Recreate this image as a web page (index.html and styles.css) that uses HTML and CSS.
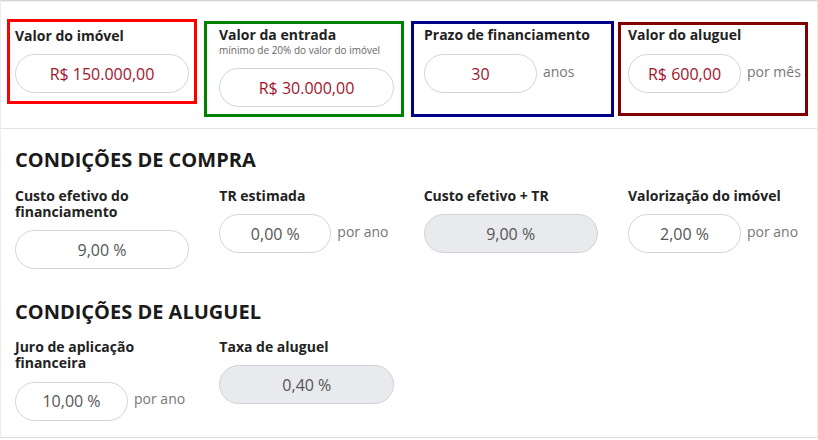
FILE: index.html
```html
<!DOCTYPE html>
<html lang="pt-BR">
<head>
<meta charset="utf-8">
<title>Simulador compra x aluguel</title>
<link rel="stylesheet" href="styles.css">
</head>
<body>
<div class="panel">
  <div class="top">
    <div class="box box--red">
      <div class="label">Valor do imóvel</div>
      <div class="row">
        <div class="input input--wide input--money">R$ 150.000,00</div>
      </div>
    </div>
    <div class="box box--green">
      <div class="label">Valor da entrada</div>
      <div class="hint">mínimo de 20% do valor do imóvel</div>
      <div class="row row--hint">
        <div class="input input--wider input--money">R$ 30.000,00</div>
      </div>
    </div>
    <div class="box box--blue">
      <div class="label">Prazo de financiamento</div>
      <div class="row">
        <div class="input input--short input--money">30</div>
        <span class="suffix">anos</span>
      </div>
    </div>
    <div class="box box--maroon">
      <div class="label">Valor do aluguel</div>
      <div class="row">
        <div class="input input--short input--money">R$ 600,00</div>
        <span class="suffix">por mês</span>
      </div>
    </div>
  </div>

  <section class="section section--compra">
    <h2 class="heading">CONDIÇÕES DE COMPRA</h2>
    <div class="grid">
      <div class="col">
        <div class="label">Custo efetivo do financiamento</div>
        <div class="row"><div class="input input--wide">9,00 %</div></div>
      </div>
      <div class="col">
        <div class="label">TR estimada</div>
        <div class="row"><div class="input input--tr">0,00 %</div><span class="suffix">por ano</span></div>
      </div>
      <div class="col">
        <div class="label">Custo efetivo + TR</div>
        <div class="row"><div class="input input--wide input--readonly">9,00 %</div></div>
      </div>
      <div class="col">
        <div class="label">Valorização do imóvel</div>
        <div class="row"><div class="input input--short">2,00 %</div><span class="suffix">por ano</span></div>
      </div>
    </div>
  </section>

  <section class="section section--aluguel">
    <h2 class="heading">CONDIÇÕES DE ALUGUEL</h2>
    <div class="grid">
      <div class="col">
        <div class="label">Juro de aplicação financeira</div>
        <div class="row row--late"><div class="input input--short">10,00 %</div><span class="suffix">por ano</span></div>
      </div>
      <div class="col">
        <div class="label">Taxa de aluguel</div>
        <div class="row"><div class="input input--wider input--readonly">0,40 %</div></div>
      </div>
    </div>
  </section>
</div>
</body>
</html>
```

FILE: styles.css
```css
* { box-sizing: border-box; }

html, body {
  margin: 0;
  padding: 0;
  background: #ffffff;
}

body {
  font-family: "Open Sans", "Liberation Sans", sans-serif;
  color: #222222;
}

.panel {
  width: 818px;
  border-top: 1px solid #d6d6d6;
  border-left: 1px solid #ececec;
  border-right: 1px solid #ececec;
  box-shadow: inset 0 1px 0 #efefef;
}

/* top row with coloured frames */
.top {
  display: flex;
  align-items: flex-start;
  padding-bottom: 11px;
  border-bottom: 1px solid #e3e3e3;
}

.box {
  border: 3px solid;
}

.box--red {
  border-color: #ff0000;
  margin: 18px 0 0 6px;
  width: 190px;
  padding: 6px 0 8px 5px;
}

.box--green {
  border-color: #008000;
  margin: 20px 0 0 7px;
  width: 200px;
  padding: 3px 0 7px 12px;
}

.box--blue {
  border-color: #00008b;
  margin: 20px 0 0 7px;
  width: 203px;
  padding: 3px 0 21px 10px;
}

.box--maroon {
  border-color: #800000;
  margin: 21px 0 0 4px;
  width: 190px;
  padding: 2px 0 20px 7px;
}

.box--red .row { margin-top: 10px; }
.box--blue .row,
.box--maroon .row { margin-top: 11px; }

.label {
  font-size: 14px;
  font-weight: 700;
  line-height: 16px;
  color: #222222;
}

.hint {
  font-size: 10px;
  line-height: 14px;
  color: #666666;
}

.row {
  display: flex;
  align-items: center;
  margin-top: 10.5px;
}

.row--hint { margin-top: 11px; }
.row--late { margin-top: 11px; }

.input {
  height: 39px;
  border: 1px solid #d1d5db;
  border-radius: 20px;
  background: #ffffff;
  display: flex;
  align-items: center;
  justify-content: center;
  font-size: 16px;
  color: #555555;
  flex: none;
}

.input--wide { width: 174px; }
.input--wider { width: 175px; }
.input--short { width: 113px; }
.input--tr { width: 112px; }

.input--money { color: #a3132b; }

.input--readonly {
  background: #e8eaed;
  border-color: #cfd3d8;
}

.suffix {
  margin-left: 6px;
  margin-bottom: 5px;
  font-size: 14px;
  color: #777777;
  white-space: nowrap;
}

/* sections */
.section--compra {
  padding: 17px 0 0 14px;
}

.section--aluguel {
  padding: 29px 0 16.5px 14px;
  border-bottom: 1px solid #dcdcdc;
}

.heading {
  margin: 0;
  font-size: 20px;
  line-height: 27px;
  font-weight: 700;
  color: #1a1a1a;
}

.grid {
  display: grid;
  grid-template-columns: repeat(4, 174px);
  column-gap: 30.33px;
  align-items: start;
}

.section--compra .grid { margin-top: 14.5px; }
.section--aluguel .grid { margin-top: 13.5px; }

.col {
  display: flex;
  flex-direction: column;
}
```
